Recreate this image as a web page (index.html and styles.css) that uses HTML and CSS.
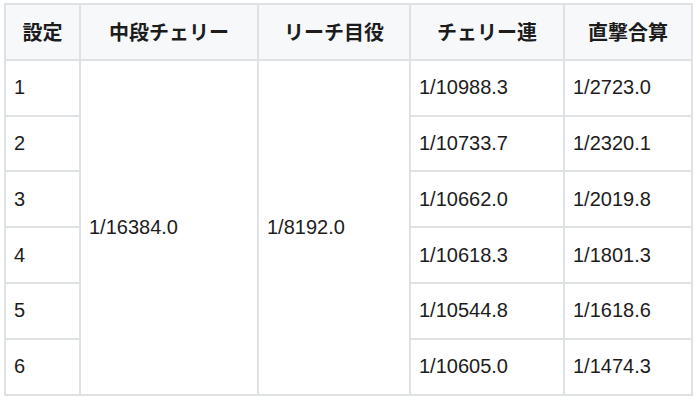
FILE: index.html
```html
<!DOCTYPE html>
<html lang="ja">
<head>
<meta charset="utf-8">
<link rel="stylesheet" href="styles.css">
</head>
<body>
<div class="wrap">
<table class="tbl">
  <colgroup>
    <col class="c1"><col class="c2"><col class="c3"><col class="c4"><col class="c5">
  </colgroup>
  <thead>
    <tr><th>設定</th><th>中段チェリー</th><th>リーチ目役</th><th>チェリー連</th><th>直撃合算</th></tr>
  </thead>
  <tbody>
    <tr><td>1</td><td rowspan="6">1/16384.0</td><td rowspan="6">1/8192.0</td><td>1/10988.3</td><td>1/2723.0</td></tr>
    <tr><td>2</td><td>1/10733.7</td><td>1/2320.1</td></tr>
    <tr><td>3</td><td>1/10662.0</td><td>1/2019.8</td></tr>
    <tr><td>4</td><td>1/10618.3</td><td>1/1801.3</td></tr>
    <tr><td>5</td><td>1/10544.8</td><td>1/1618.6</td></tr>
    <tr><td>6</td><td>1/10605.0</td><td>1/1474.3</td></tr>
  </tbody>
</table>
</div>
</body>
</html>
```
FILE: styles.css
```css
html, body {
  margin: 0;
  padding: 0;
  background: #ffffff;
}
.wrap {
  padding: 3px 0 0 4px;
}
.tbl {
  border-collapse: separate;
  border-spacing: 0;
  table-layout: fixed;
  width: 689px;
  border-top: 2px solid #dfe2e5;
  border-left: 2px solid #dfe2e5;
  font-family: "Liberation Sans", "Noto Sans CJK JP", sans-serif;
  font-size: 20px;
  color: #1c1c1c;
}
.c1 { width: 75px; }
.c2 { width: 178px; }
.c3 { width: 152px; }
.c4 { width: 154px; }
.c5 { width: 128px; }
.tbl th, .tbl td {
  border-right: 2px solid #dfe2e5;
  border-bottom: 2px solid #dfe2e5;
  padding: 0 8px;
  vertical-align: middle;
  box-sizing: border-box;
}
.tbl tr {
  height: 55.8px;
}
.tbl th {
  background: #f6f8fa;
  font-weight: 700;
  text-align: center;
  font-family: "Noto Sans CJK JP", sans-serif;
}
.tbl td {
  text-align: left;
  font-weight: 400;
}
```
